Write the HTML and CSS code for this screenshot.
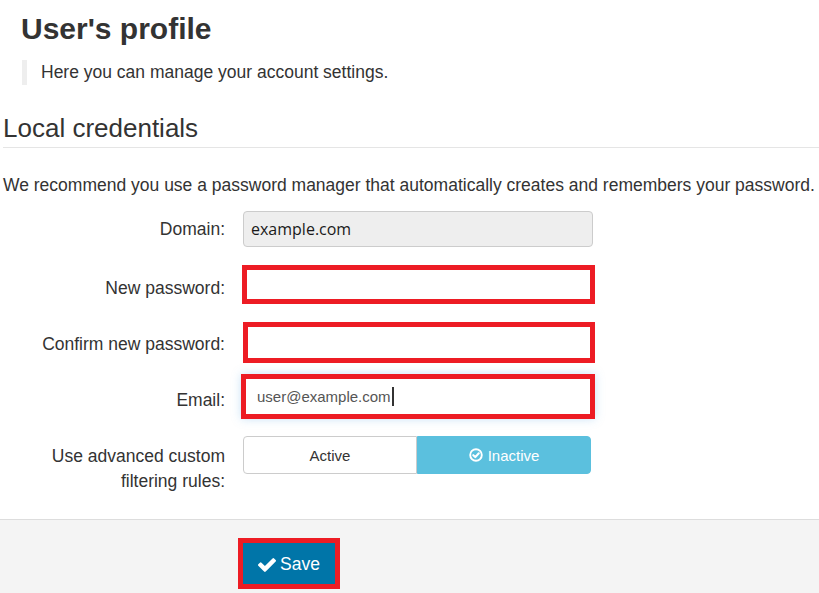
FILE: index.html
```html
<!DOCTYPE html>
<html lang="en">
<head>
<meta charset="utf-8">
<title>User's profile</title>
<link rel="stylesheet" href="styles.css">
</head>
<body>
<main class="page">
  <header class="intro">
    <h1 class="title">User's profile</h1>
    <blockquote class="lead">Here you can manage your account settings.</blockquote>
  </header>
  <section class="section">
    <h2 class="legend">Local credentials</h2>
    <p class="hint">We recommend you use a password manager that automatically creates and remembers your password.</p>
    <div class="form">
      <div class="row">
        <label class="label">Domain:</label>
        <div class="input readonly">example.com</div>
      </div>
      <div class="row">
        <label class="label shift7">New password:</label>
        <div class="input annot annot-a"></div>
      </div>
      <div class="row">
        <label class="label shift3">Confirm new password:</label>
        <div class="input annot annot-b"></div>
      </div>
      <div class="row">
        <label class="label shift7">Email:</label>
        <div class="input annot annot-c focus">user@example.com<span class="caret"></span></div>
      </div>
      <div class="row row-top">
        <label class="label multi">Use advanced custom filtering rules:</label>
        <div class="toggle">
          <span class="opt">Active</span>
          <span class="opt on">
            <svg class="circ" width="14" height="14" viewBox="0 0 14 14" aria-hidden="true"><circle cx="7" cy="7" r="5.8" fill="none" stroke="#fff" stroke-width="1.9"/><path d="M4.3 7.2 L6.3 9.1 L9.8 5.3" fill="none" stroke="#fff" stroke-width="2.1" stroke-linecap="round" stroke-linejoin="round"/></svg>
            Inactive
          </span>
        </div>
      </div>
    </div>
  </section>
</main>
<footer class="actions">
  <button class="save" type="button">
    <svg width="18" height="14" viewBox="121 334 1550 1188" aria-hidden="true"><path fill="#fff" d="M1671 566q0 40-28 68l-724 724-136 136q-28 28-68 28t-68-28l-136-136-362-362q-28-28-28-68t28-68l136-136q28-28 68-28t68 28l294 295 656-657q28-28 68-28t68 28l136 136q28 28 28 68z"/></svg>
    <span>Save</span>
  </button>
</footer>
</body>
</html>
```
FILE: styles.css
```css
* { box-sizing: border-box; }
html, body { margin: 0; padding: 0; background: #fff; }
body {
  font-family: "Liberation Sans", Arial, sans-serif;
  color: #333;
  font-size: 17.5px;
  line-height: 25px;
  width: 819px;
  height: 593px;
  overflow: hidden;
}
.page { padding-left: 3px; }
.intro { padding-left: 18px; padding-top: 12px; }
.title {
  margin: 0;
  font-size: 30px;
  line-height: 33px;
  font-weight: bold;
}
.lead {
  margin: 15px 0 0 1px;
  padding: 0 0 0 14px;
  border-left: 5px solid #eee;
  font-size: 17.5px;
  line-height: 25px;
}
.legend {
  margin: 29px 0 0 0;
  padding: 0 0 4px 0;
  font-size: 26px;
  line-height: 29px;
  font-weight: normal;
  border-bottom: 1px solid #e5e5e5;
}
.hint { margin: 25px 0 0 0; }
.form { margin-top: 13px; display: flex; flex-direction: column; }
.row { display: flex; align-items: center; gap: 18px; }
.row + .row { margin-top: 18px; }
.row:nth-child(4) { margin-top: 11px; }
.row:nth-child(5) { margin-top: 17px; }
.row-top { align-items: flex-start; }
.label { width: 222px; text-align: right; flex: none; }
.shift7 { padding-top: 7px; }
.shift3 { padding-top: 3px; }
.multi { padding-top: 8px; }
.input {
  width: 350px;
  height: 36px;
  border: 1px solid #ccc;
  border-radius: 4px;
  background: #fff;
  font-size: 15px;
  color: #555;
  display: flex;
  align-items: center;
  padding: 0 7px;
}
.readonly {
  background: #eee;
  color: #1a1a1a;
  font-family: "Open Sans", "Noto Sans", sans-serif;
  font-size: 16px;
}
.annot { border: 5px solid #ed1c24; border-radius: 0; }
.annot-a { width: 353px; height: 39px; margin-left: -1px; }
.annot-b { width: 352px; height: 41px; }
.annot-c { width: 354px; height: 45px; margin-left: -2px; padding-left: 11px; }
.focus { box-shadow: 0 0 9px rgba(102, 175, 233, 0.35); }
.caret { display: inline-block; width: 2px; height: 19px; background: #333; margin-left: 1px; }
.toggle { display: flex; width: 348px; height: 38px; font-size: 15px; }
.opt {
  flex: 1;
  display: flex;
  align-items: center;
  justify-content: center;
  border: 1px solid #ccc;
  background: #fff;
  color: #333;
  border-radius: 4px 0 0 4px;
}
.opt.on {
  background: #5bc0de;
  border-color: #5bc0de;
  color: #fff;
  border-radius: 0 4px 4px 0;
  gap: 5px;
}
.circ { display: block; }
.actions {
  margin-top: 25px;
  border-top: 1px solid #ddd;
  background: #f4f4f4;
  height: 100px;
  padding: 18px 0 0 238px;
}
.save {
  width: 102px;
  height: 51px;
  border: 5px solid #ed1c24;
  background: #0075a8;
  color: #fff;
  font-family: "Liberation Sans", Arial, sans-serif;
  font-size: 17.5px;
  display: flex;
  align-items: center;
  gap: 4px;
  padding: 2px 0 0 15px;
  margin: 0;
  cursor: pointer;
}
.save svg { display: block; }
```
